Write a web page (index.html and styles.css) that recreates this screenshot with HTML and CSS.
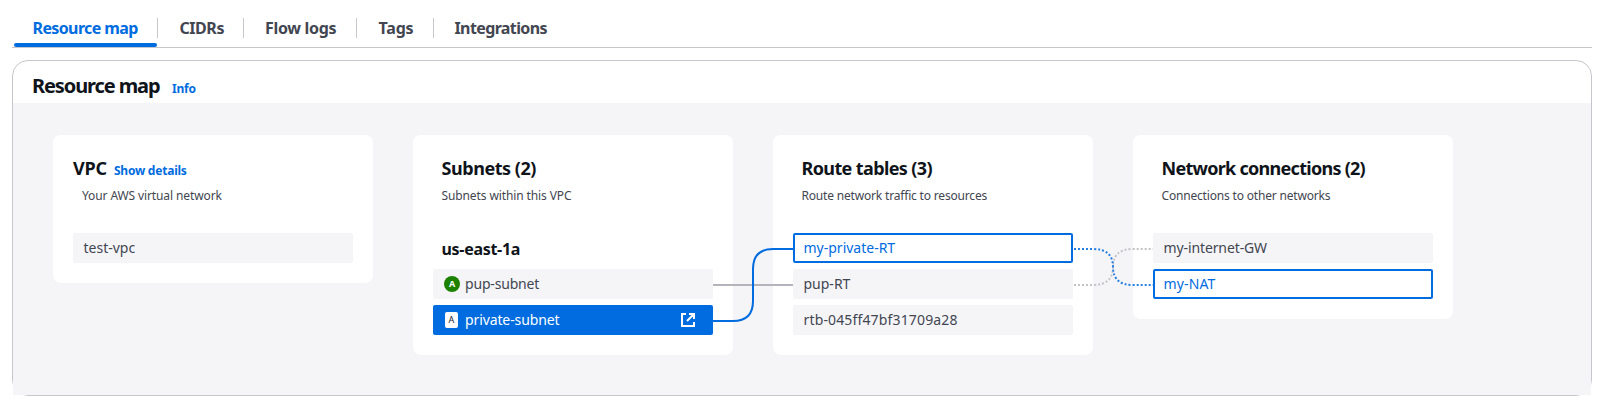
FILE: index.html
```
<!DOCTYPE html>
<html lang="en">
<head>
<meta charset="utf-8">
<title>Resource map</title>
<link rel="stylesheet" href="styles.css">
</head>
<body>
<nav class="tabs">
  <a class="tab active tight-6">Resource map</a>
  <a class="tab cidrs tight-4">CIDRs</a>
  <a class="tab flow tight-3">Flow logs</a>
  <a class="tab tags tight-2">Tags</a>
  <a class="tab last tight-6">Integrations</a>
</nav>
<main class="panel">
  <header class="panel-head">
    <h1 class="panel-title">Resource map</h1>
    <a class="link">Info</a>
  </header>
  <div class="map">
    <section class="card">
      <div class="card-head flush"><h2 class="tight-2">VPC</h2><a class="link details">Show details</a></div>
      <p class="desc vpc-desc tight-1">Your AWS virtual network</p>
      <ul class="items"><li class="item">test-vpc</li></ul>
    </section>
    <section class="card">
      <div class="card-head"><h2 class="tight-4">Subnets (2)</h2></div>
      <p class="desc tight-1">Subnets within this VPC</p>
      <h3 class="zone tight-3">us-east-1a</h3>
      <ul class="items zoned">
        <li class="item tight-2"><span class="badge public">A</span>pup-subnet</li>
        <li class="item selected tight-1"><span class="badge private">A</span>private-subnet
          <svg class="open" width="16" height="16" viewBox="0 0 16 16" fill="none" stroke="#fff" stroke-width="2"><path d="M6 2H2v12h12v-4M9 2h5v5M14 2 7 9"/></svg>
        </li>
      </ul>
    </section>
    <section class="card">
      <div class="card-head"><h2 class="tight-6">Route tables (3)</h2></div>
      <p class="desc tight-2">Route network traffic to resources</p>
      <ul class="items">
        <li class="item related">my-private-RT</li>
        <li class="item">pup-RT</li>
        <li class="item wide">rtb-045ff47bf31709a28</li>
      </ul>
    </section>
    <section class="card">
      <div class="card-head"><h2 class="tight-7">Network connections (2)</h2></div>
      <p class="desc tight-2">Connections to other networks</p>
      <ul class="items">
        <li class="item tight-1">my-internet-GW</li>
        <li class="item related wide">my-NAT</li>
      </ul>
    </section>
    <svg class="wires" width="1578" height="292" viewBox="13 103 1578 292" fill="none" stroke-width="2">
      <path class="idle" d="M713 285H793"/>
      <path class="live" d="M713 321H733Q753 321 753 301V269Q753 249 773 249H793"/>
      <path class="idle dotted" d="M1073 285H1093Q1113 285 1113 267Q1113 249 1133 249H1153"/>
      <path class="live dotted" d="M1073 249H1093Q1113 249 1113 267Q1113 285 1133 285H1153"/>
    </svg>
  </div>
</main>
</body>
</html>
```
FILE: styles.css
```
* { box-sizing: border-box; margin: 0; padding: 0; }
body { width: 1608px; height: 411px; padding: 0 16px 0 12px; overflow: hidden; background: #fff; color: #0f141a; font-family: "Noto Sans", "Open Sans", sans-serif; }
.tabs { display: flex; height: 48px; border-bottom: 1px solid #c6c6cd; padding: 18px 0 0 2px; }
.tab { position: relative; height: 29px; padding: 0 18px; color: #424650; font-size: 16px; font-weight: 700; line-height: 20px; white-space: nowrap; }
.tab::after { content: ""; position: absolute; right: 0; top: 0; width: 1px; height: 20px; background: #c6c6cd; }
.tab.last::after { display: none; }
.tab.active { width: 144px; padding-left: 18.5px; color: #006ce0; }
.tab.active::before { content: ""; position: absolute; left: 0; right: 1px; bottom: 0; height: 4px; border-radius: 4px; background: #006ce0; }
.tab.cidrs { width: 86px; padding-left: 21.5px; }
.tab.flow { width: 113px; padding-left: 21px; }
.tab.tags { width: 77px; padding-left: 21.5px; }
.tab.last { padding-left: 20.5px; }
.tight-1 { letter-spacing: -0.11px; }
.tight-2 { letter-spacing: -0.18px; }
.tight-3 { letter-spacing: -0.3px; }
.tight-4 { letter-spacing: -0.45px; }
.tight-6 { letter-spacing: -0.62px; }
.tight-7 { letter-spacing: -0.72px; }
.wide { letter-spacing: 0.15px; }
.panel { height: 336px; margin-top: 12px; border: 1px solid #c6c6cd; border-radius: 16px; }
.panel-head { display: flex; align-items: baseline; height: 42px; padding: 12px 20px 0 19px; }
.panel-title { font-size: 20px; line-height: 26px; font-weight: 700; letter-spacing: -1.1px; margin-right: 12.5px; }
.link { color: #006ce0; font-size: 12px; line-height: 16px; font-weight: 700; letter-spacing: -0.22px; }
.map { position: relative; display: flex; align-items: flex-start; gap: 40px; height: 292px; padding: 32px 40px 0; background: #f5f5f8; }
.card { width: 320px; padding: 22px 20px 20px; border-radius: 8px; background: #fff; }
.card-head { display: flex; align-items: baseline; height: 22px; padding-left: 8.5px; }
.card-head.flush { padding-left: 0; }
.card-head h2 { font-size: 18px; line-height: 22px; font-weight: 700; white-space: nowrap; }
.details { margin-left: 7px; }
.desc { margin-top: 9px; padding-left: 8.5px; color: #424650; font-size: 12px; line-height: 16px; }
.vpc-desc { padding-left: 9px; }
.zone { margin-top: 35px; padding-left: 8.5px; font-size: 16px; line-height: 20px; font-weight: 700; }
.items { display: grid; gap: 6px; margin-top: 29px; list-style: none; }
.items.zoned { margin-top: 10px; }
.item { display: flex; align-items: center; height: 30px; padding: 0 17px 0 10.5px; border-radius: 2px; background: #f5f5f8; color: #424650; font-size: 14px; line-height: 30px; }
.item.related { padding-left: 8.5px; border: 2px solid #006ce0; background: #fff; color: #006ce0; line-height: 26px; }
.item.selected { padding-left: 11px; background: #006ce0; color: #fff; }
.badge { flex: none; text-align: center; font-size: 9px; letter-spacing: 0; }
.badge.public { width: 16px; height: 16px; margin: 0 5px 0 0.5px; border-radius: 50%; background: #1d8102; color: #fff; font-weight: 700; line-height: 16px; }
.badge.private { width: 13px; height: 16px; margin: 0 7px 0 1px; border-radius: 2px; background: #fff; color: #16191f; line-height: 16px; font-weight: 400; }
.open { margin-left: auto; }
.wires { position: absolute; left: 0; top: 0; }
.idle { stroke: #b4b4bb; }
.live { stroke: #006ce0; }
.dotted { stroke-dasharray: 2 2; stroke-dashoffset: 3; }
.idle.dotted { stroke: #c3c3c8; }
.live.dotted { stroke: #2480e4; }
```
